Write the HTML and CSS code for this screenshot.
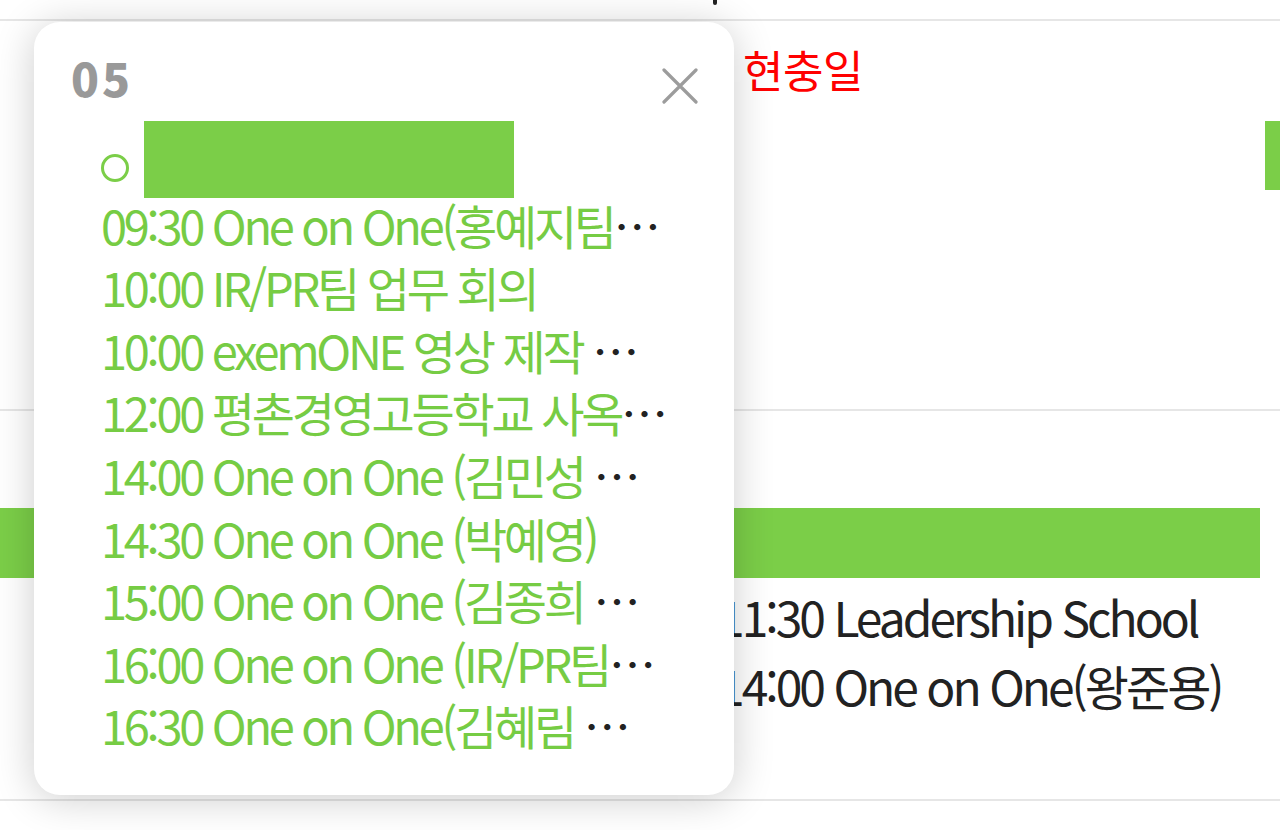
FILE: index.html
```html
<!DOCTYPE html>
<html lang="ko">
<head>
<meta charset="utf-8">
<title>Calendar</title>
<link rel="stylesheet" href="styles.css">
</head>
<body>
<div class="calendar">
  <div class="week-head">
    <div class="head-cell"><span class="mark mark-a"></span></div>
    <div class="head-cell"></div>
    <div class="head-cell"><span class="mark mark-b"></span></div>
    <div class="head-cell"></div>
  </div>
  <div class="week week-1">
    <div class="day"></div>
    <div class="day"></div>
    <div class="day">
      <div class="day-label holiday">현충일</div>
    </div>
    <div class="day">
      <div class="day-label"></div>
      <div class="bar bar-edge"></div>
    </div>
  </div>
  <div class="week week-2">
    <div class="day-label span-all"></div>
    <div class="bar bar-long"></div>
    <div class="day day-3">
      <div class="event">11:30 Leadership School</div>
      <div class="event">14:00 One on One(왕준용)</div>
    </div>
  </div>
</div>

<div class="popup">
  <div class="popup-head">
    <div class="popup-date">05</div>
    <svg class="popup-close" viewBox="0 0 36 36" width="36" height="36" aria-label="닫기">
      <path d="M2 2 L34 34 M34 2 L2 34" stroke="#9c9c9c" stroke-width="3.2" fill="none" stroke-linecap="round"/>
    </svg>
  </div>
  <ul class="popup-list">
    <li class="item item-first"><span class="ring"></span><span class="redact"></span></li>
    <li class="item"><span class="txt">09:30 One on One(홍예지팀</span><span class="more">…</span></li>
    <li class="item"><span class="txt">10:00 IR/PR팀 업무 회의</span></li>
    <li class="item"><span class="txt">10:00 exemONE 영상 제작 </span><span class="more">…</span></li>
    <li class="item"><span class="txt">12:00 평촌경영고등학교 사옥</span><span class="more">…</span></li>
    <li class="item"><span class="txt">14:00 One on One (김민성 </span><span class="more">…</span></li>
    <li class="item"><span class="txt">14:30 One on One (박예영)</span></li>
    <li class="item"><span class="txt">15:00 One on One (김종희 </span><span class="more">…</span></li>
    <li class="item"><span class="txt">16:00 One on One (IR/PR팀</span><span class="more">…</span></li>
    <li class="item"><span class="txt">16:30 One on One(김혜림 </span><span class="more">…</span></li>
  </ul>
</div>
</body>
</html>
```

FILE: styles.css
```css
html, body {
  margin: 0;
  padding: 0;
  background: #ffffff;
  width: 1280px;
  height: 830px;
  overflow: hidden;
  font-family: "Noto Sans CJK KR", "Noto Sans", sans-serif;
}

.calendar {
  display: flex;
  flex-direction: column;
}

.week-head,
.week {
  display: grid;
  grid-template-columns: 155px 555px 555px 15px;
  align-content: start;
  border-bottom: 2px solid #e6e6e6;
  box-sizing: border-box;
}

.week-head {
  height: 21px;
}

.mark {
  display: block;
  width: 4px;
  height: 5px;
  background: #222;
  border-radius: 0 0 2px 2px;
}

.mark-a { margin-left: -58px; }
.mark-b { margin-left: 3px; }

.week {
  height: 390px;
}

.day {
  display: flex;
  flex-direction: column;
}

.day-label {
  height: 100px;
  box-sizing: border-box;
  padding: 18px 0 0 33px;
  font-size: 44px;
  line-height: 60px;
  letter-spacing: -0.5px;
}

.holiday {
  color: #ff0000;
}

.bar {
  background: #7bce48;
  height: 69px;
}

.week-2 .span-all {
  grid-column: 1 / 5;
  grid-row: 1;
  height: 97px;
  padding: 0;
}

.bar-long {
  grid-column: 1 / 4;
  grid-row: 2;
  margin-right: 5px;
  height: 70px;
}

.day-3 {
  grid-column: 3;
  grid-row: 3;
  padding: 4px 0 0 8px;
}

.event {
  font-size: 48px;
  line-height: 69px;
  color: #222;
  white-space: nowrap;
  letter-spacing: -3px;
}

.popup {
  position: absolute;
  left: 34px;
  top: 22px;
  width: 700px;
  height: 773px;
  box-sizing: border-box;
  padding: 32px 36px 0 37px;
  background: #fff;
  border-radius: 26px;
  box-shadow: 0 4px 40px rgba(0, 0, 0, 0.2);
}

.popup-head {
  display: flex;
  justify-content: space-between;
  align-items: flex-start;
}

.popup-date {
  font-size: 46px;
  line-height: 46px;
  font-weight: 900;
  color: #999;
  letter-spacing: 3px;
}

.popup-close {
  margin-top: 14px;
}

.popup-list {
  list-style: none;
  margin: 27px 36px 0 30px;
  padding: 0;
}

.item {
  height: 62.6px;
  font-size: 47px;
  line-height: 62.6px;
  white-space: nowrap;
  color: #222;
  letter-spacing: -3.3px;
}

.item-first {
  display: flex;
  align-items: center;
}

.ring {
  width: 22px;
  height: 22px;
  border: 3.5px solid #7bce48;
  border-radius: 50%;
  margin-top: 12px;
}

.redact {
  width: 370px;
  height: 77px;
  background: #7bce48;
  margin-left: 15px;
  margin-bottom: 6px;
}

.txt {
  color: #76cc44;
}

.more {
  color: #222;
  letter-spacing: 0;
}
```
